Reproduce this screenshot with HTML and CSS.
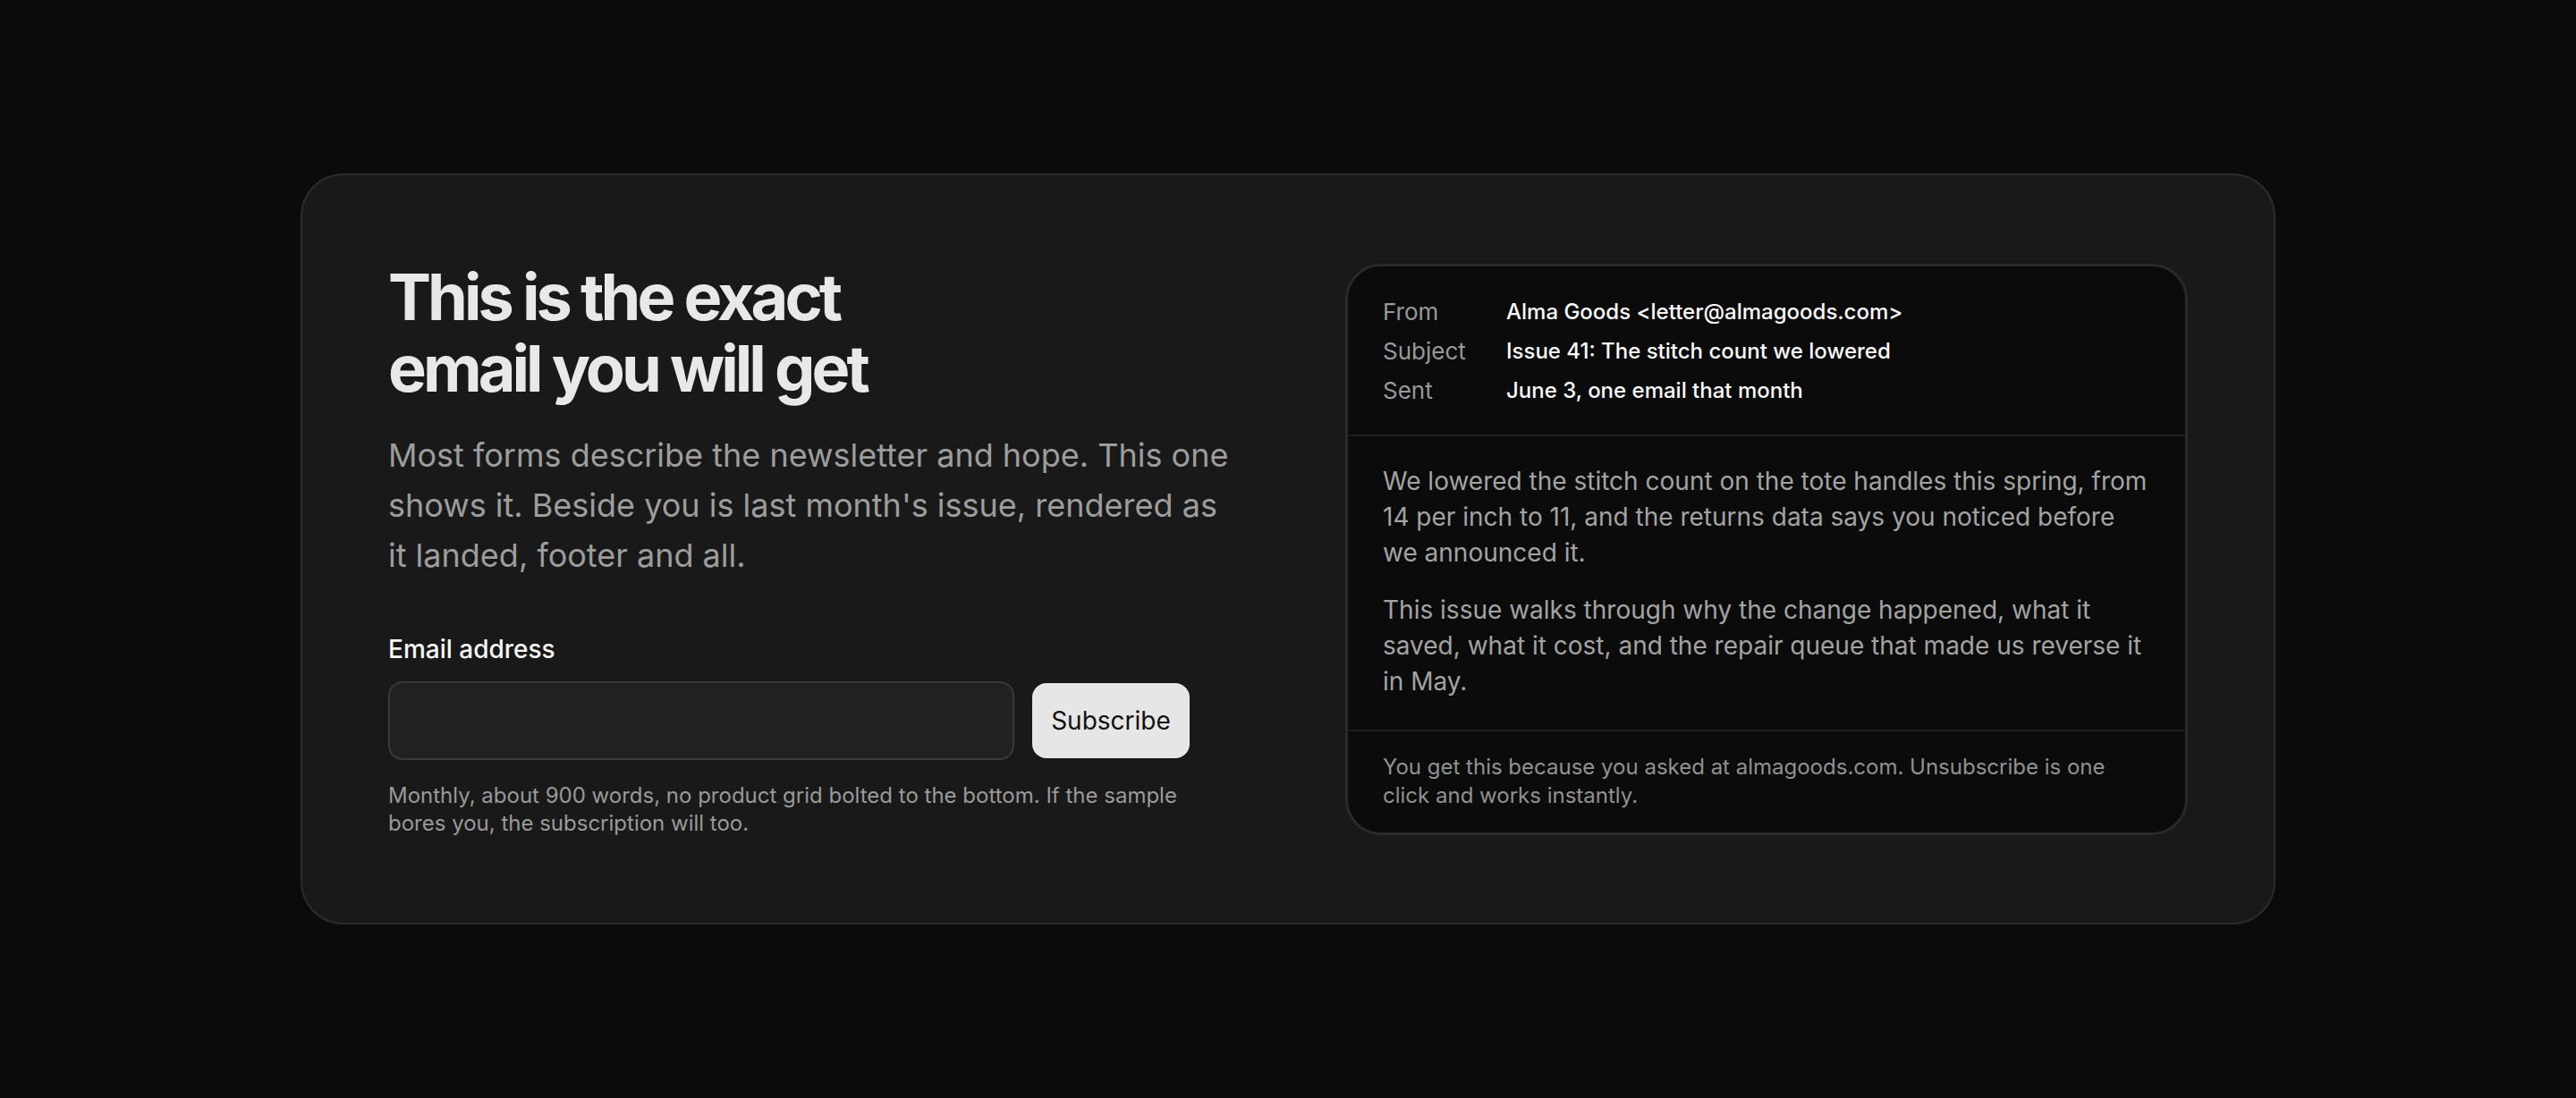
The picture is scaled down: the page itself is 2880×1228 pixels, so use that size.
FILE: index.html
```html
<!DOCTYPE html>
<html lang="en">
<head>
<meta charset="utf-8">
<title>Newsletter signup</title>
<link rel="stylesheet" href="styles.css">
</head>
<body>
<main class="page">
  <section class="card">
    <div class="intro">
      <h1 class="title">This is the exact email you will get</h1>
      <p class="lede">Most forms describe the newsletter and hope. This one shows it. Beside you is last month's issue, rendered as it landed, footer and all.</p>
      <form class="signup">
        <label class="label" for="email">Email address</label>
        <div class="row">
          <input class="input" id="email" type="email">
          <button class="button" type="button">Subscribe</button>
        </div>
        <p class="note">Monthly, about 900 words, no product grid bolted to the bottom. If the sample bores you, the subscription will too.</p>
      </form>
    </div>
    <article class="mail">
      <dl class="mail-head">
        <dt>From</dt><dd>Alma Goods &lt;letter@almagoods.com&gt;</dd>
        <dt>Subject</dt><dd>Issue 41: The stitch count we lowered</dd>
        <dt>Sent</dt><dd>June 3, one email that month</dd>
      </dl>
      <div class="mail-body">
        <p>We lowered the stitch count on the tote handles this spring, from 14 per inch to 11, and the returns data says you noticed before we announced it.</p>
        <p>This issue walks through why the change happened, what it saved, what it cost, and the repair queue that made us reverse it in May.</p>
      </div>
      <footer class="mail-foot">You get this because you asked at almagoods.com. Unsubscribe is one click and works instantly.</footer>
    </article>
  </section>
</main>
</body>
</html>
```

FILE: styles.css
```css
* { box-sizing: border-box; }

html, body {
  margin: 0;
  padding: 0;
  background: #0b0b0b;
}

body {
  font-family: Inter, "Noto Sans", "Liberation Sans", sans-serif;
  color: #e8e8e8;
}

.page {
  min-height: 100vh;
  display: flex;
  align-items: center;
  justify-content: center;
}

.card {
  width: 2208px;
  background: #191919;
  border: 2px solid #2c2c2c;
  border-radius: 48px;
  padding: 96px;
  display: grid;
  grid-template-columns: 1fr 1fr;
  column-gap: 128px;
  align-items: center;
}

.intro {
  display: flex;
  flex-direction: column;
}

.title {
  margin: 0;
  max-width: 640px;
  font-size: 72px;
  line-height: 80px;
  font-weight: 700;
  letter-spacing: -0.055em;
  color: #e8e8e8;
}

.lede {
  margin: 29px 0 0;
  font-size: 36px;
  line-height: 56px;
  color: #9d9d9d;
}

.signup {
  margin-top: 57px;
  max-width: 896px;
  display: flex;
  flex-direction: column;
}

.label {
  font-size: 28px;
  line-height: 40px;
  font-weight: 500;
  color: #f7f7f7;
}

.row {
  margin-top: 16px;
  display: flex;
  align-items: center;
  gap: 20px;
}

.input {
  flex: 1;
  height: 88px;
  background: #212121;
  border: 2px solid #3a3a3a;
  border-radius: 16px;
  font: inherit;
  color: #eee;
  padding: 0 24px;
}

.button {
  height: 84px;
  width: 176px;
  border: none;
  border-radius: 16px;
  background: #e6e6e6;
  color: #111;
  font-family: inherit;
  font-size: 28px;
  font-weight: 400;
  padding: 0;
}

.note {
  margin: 24px 0 0;
  font-size: 24px;
  line-height: 31px;
  color: #9a9a9a;
}

.mail {
  background: #0b0b0b;
  border: 3px solid #2a2a2a;
  border-radius: 40px;
  overflow: hidden;
}

.mail-head {
  margin: 0;
  padding: 33px 39px 31px;
  display: grid;
  grid-template-columns: 138px 1fr;
  row-gap: 8px;
  font-size: 26px;
  line-height: 36px;
  border-bottom: 2px solid #1f1f1f;
}

.mail-head dt {
  color: #999;
}

.mail-head dd {
  margin: 0;
  font-size: 24px;
  color: #fafafa;
  font-weight: 500;
}

.mail-body {
  padding: 30px 39px 34px;
  border-bottom: 2px solid #1f1f1f;
  display: flex;
  flex-direction: column;
  gap: 24px;
}

.mail-body p {
  margin: 0;
  font-size: 28px;
  line-height: 40px;
  color: #a3a3a3;
}

.mail-foot {
  padding: 24px 39px 25px;
  font-size: 24px;
  line-height: 32px;
  color: #919191;
}
```
